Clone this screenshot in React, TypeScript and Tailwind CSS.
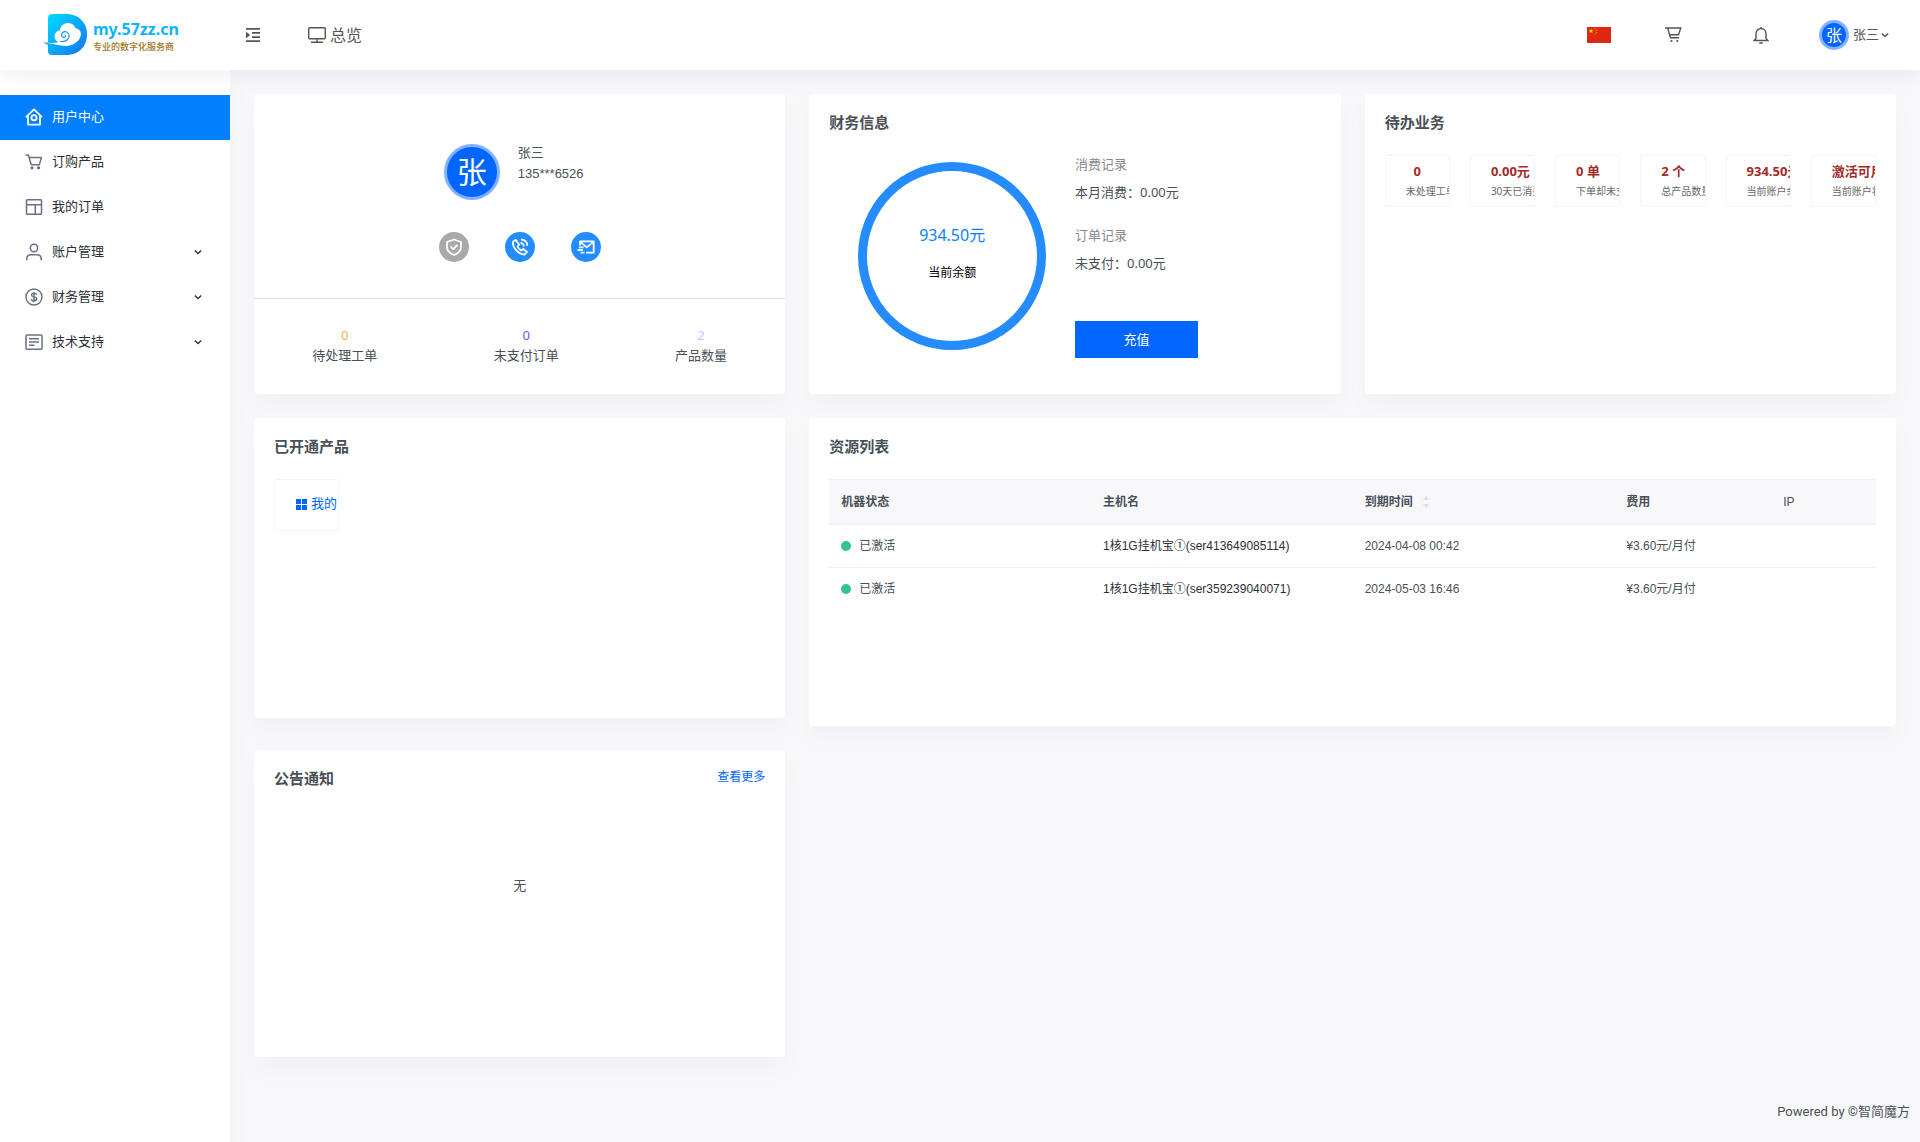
import React from 'react';

interface MenuItem {
  label: string;
  icon: React.ReactNode;
  active?: boolean;
  expandable?: boolean;
}

interface Resource {
  id: string;
  status: string;
  host: string;
  due: string;
  price: string;
}

const HomeIcon = () => (
  <svg viewBox="0 0 18 18" className="h-[18px] w-[18px]" fill="none" stroke="currentColor" strokeWidth="1.8">
    <path d="M1 9.2 9 1.4l8 7.8M3 8v8.6h12V8" strokeLinejoin="round" />
    <circle cx="9" cy="9.8" r="2.6" />
  </svg>
);

const SideCartIcon = () => (
  <svg viewBox="0 0 18 18" className="h-[18px] w-[18px]" fill="none" stroke="currentColor" strokeWidth="1.5">
    <path d="M.5 2h2.8l3 9.8h8L16.4 4.6H4.2" strokeLinejoin="round" />
    <circle cx="7" cy="14.8" r=".9" fill="currentColor" />
    <circle cx="13.5" cy="14.8" r=".9" fill="currentColor" />
  </svg>
);

const LayoutIcon = () => (
  <svg viewBox="0 0 18 18" className="h-[18px] w-[18px]" fill="none" stroke="currentColor" strokeWidth="1.5">
    <rect x="1.5" y="1.7" width="15" height="14.6" rx=".8" />
    <path d="M1.5 6.7h15M10.3 6.7v9.6" />
  </svg>
);

const UserIcon = () => (
  <svg viewBox="0 0 18 18" className="h-[18px] w-[18px]" fill="none" stroke="currentColor" strokeWidth="1.6">
    <circle cx="9" cy="5" r="3.7" />
    <path d="M1.8 17.2v-1.4c0-2.4 1.9-4 4.3-4h5.8c2.4 0 4.3 1.6 4.3 4v1.4" />
  </svg>
);

const DollarIcon = () => (
  <svg viewBox="0 0 18 18" className="h-[18px] w-[18px]" fill="none" stroke="currentColor" strokeWidth="1.4">
    <circle cx="9" cy="9" r="8" />
    <path d="M11.6 6.7c-.3-.9-1.2-1.4-2.6-1.4-1.5 0-2.5.7-2.5 1.8 0 2.6 5.2 1.2 5.2 3.9 0 1.1-1.1 1.800-2.7 1.800s-2.6-.6-2.8-1.7M9 3.9v10.3" />
  </svg>
);

const DocIcon = () => (
  <svg viewBox="0 0 18 18" className="h-[18px] w-[18px]" fill="none" stroke="currentColor" strokeWidth="1.5">
    <rect x="1" y="2" width="16" height="14.2" rx="1" />
    <path d="M4 5.8h10M4 9h10M4 12.2h5.5" />
  </svg>
);

const Chevron = ({ className }: { className: string }) => (
  <svg viewBox="0 0 8 8" className={className} fill="none" stroke="currentColor" strokeWidth="1.3">
    <path d="m.8 2.5 3.2 3 3.2-3" />
  </svg>
);

const Logo = () => (
  <svg viewBox="0 0 44 42" className="h-[42px] w-11 shrink-0">
    <defs>
      <linearGradient id="logoFill" x1="0" y1="0" x2="1" y2="1">
        <stop offset="0" stopColor="#00dcff" />
        <stop offset="1" stopColor="#1673f0" />
      </linearGradient>
    </defs>
    <path d="M9 0h14c12.500 0 21 8.500 21 20.500S35.500 41 23 41H9c-2.600 0-4-1.600-4-4V4c0-2.400 1.400-4 4-4z" fill="url(#logoFill)" />
    <path d="M0 28c2 .6 4 .9 6 .8v2.400C4 30.600 2 29.600 0 28z" fill="#12a5f5" />
    <path
      d="M5 28.700c4.500.5 7.500.2 10.500-.5-3.600-1.600-4.500-5-3.500-8 1-2.700 3-3.800 5-3.900.4-4.600 4-7.600 8.400-7.400 3.600.2 6 2.200 7 5 4.600 1 6 4 5.300 7.800-.9 5-6.700 9.800-13.700 10.200-7 .4-12.500-2.300-19-2.600z"
      fill="#fff"
    />
    <path d="M17.500 27.500c5.800.5 8.900-2.300 8.600-5.900-.2-3.300-4-5.200-6.400-3.200-1.800 1.600-1.300 4.300.6 4.900 1.300.3 2.300-.5 2.200-1.600" fill="none" stroke="#1597f5" strokeWidth="1.2" strokeLinecap="round" />
  </svg>
);

const menuItems: MenuItem[] = [
  { label: '用户中心', icon: <HomeIcon />, active: true },
  { label: '订购产品', icon: <SideCartIcon /> },
  { label: '我的订单', icon: <LayoutIcon /> },
  { label: '账户管理', icon: <UserIcon />, expandable: true },
  { label: '财务管理', icon: <DollarIcon />, expandable: true },
  { label: '技术支持', icon: <DocIcon />, expandable: true },
];

const stats = [
  { value: '0', label: '待处理工单', color: 'text-[#f1b05c]' },
  { value: '0', label: '未支付订单', color: 'text-[#5b5bff]' },
  { value: '2', label: '产品数量', color: 'text-[#b5d0ff]' },
];

const todos = [
  { value: '0', label: '未处理工单' },
  { value: '0.00元', label: '30天已消费' },
  { value: '0 单', label: '下单却未支付' },
  { value: '2 个', label: '总产品数量' },
  { value: '934.50元', label: '当前账户余额' },
  { value: '激活可用', label: '当前账户状态' },
];

const resources: Resource[] = [
  { id: 'ser413649085114', status: '已激活', host: '1核1G挂机宝①', due: '2024-04-08 00:42', price: '¥3.60元/月付' },
  { id: 'ser359239040071', status: '已激活', host: '1核1G挂机宝①', due: '2024-05-03 16:46', price: '¥3.60元/月付' },
];

const Card = ({ className = '', children }: { className?: string; children: React.ReactNode }) => (
  <section className={`rounded bg-white shadow-[0_12px_24px_rgba(18,38,63,0.03)] ${className}`}>{children}</section>
);

const CardTitle = ({ children }: { children: React.ReactNode }) => (
  <h2 className="mb-6 text-[15px] leading-[18px] font-bold text-[#495057]">{children}</h2>
);

const Header = () => (
  <header className="relative z-20 flex h-[70px] items-center bg-white text-[#555] shadow-[0_4px_20px_rgba(18,38,63,0.08)]">
    <a href="#" className="flex w-[230px] items-center gap-1.5 pl-[43px]">
      <Logo />
      <span className="flex flex-col whitespace-nowrap">
        <span className="font-['Noto_Sans',sans-serif] text-base leading-6 font-bold text-[#0cb4ff]">my.57zz.cn</span>
        <span className="text-[9px] leading-3 font-medium text-[#a0741c]">专业的数字化服务商</span>
      </span>
    </a>
    <button type="button" aria-label="菜单" className="ml-4">
      <svg viewBox="0 0 14 14" className="h-3.5 w-3.5" fill="currentColor">
        <path d="M0 0h14v1.7H0zM6 4.1h8v1.7H6zM6 8.2h8v1.7H6zM0 12.3h14V14H0zM0 3.7 4.2 7 0 10.3z" />
      </svg>
    </button>
    <a href="#" className="ml-12 flex items-center gap-1 text-base leading-5">
      <svg viewBox="0 0 18 16" className="h-4 w-[18px]" fill="none" stroke="currentColor" strokeWidth="1.4">
        <rect x=".7" y=".7" width="16.6" height="11" rx="1" />
        <path d="M9 12v3M3 15.3h12" />
      </svg>
      总览
    </a>
    <div className="ml-auto flex items-center pr-[31px]">
      <button type="button" aria-label="语言">
        <svg viewBox="0 0 24 16" className="h-4 w-6">
          <path d="M0 0h24v16H0z" fill="#de2910" />
          <g fill="#ffde00">
            <path d="m4 1.600.6 1.700h1.800L5 4.400l.5 1.700L4 5.100 2.500 6.100 3 4.400 1.600 3.300h1.800z" />
            <circle cx="8" cy="1.700" r=".5" />
            <circle cx="9.700" cy="3.200" r=".5" />
            <circle cx="9.700" cy="5.300" r=".5" />
            <circle cx="8" cy="6.900" r=".5" />
          </g>
        </svg>
      </button>
      <button type="button" aria-label="购物车" className="ml-[54px]">
        <svg viewBox="0 0 17 16" className="h-4 w-[17px]" fill="none" stroke="currentColor" strokeWidth="1.4">
          <path d="M0 1h15.800l-2.300 6.800H5.300M2.600 1 5.500 10.800h8.600" />
          <circle cx="6.500" cy="14" r="1.100" fill="currentColor" stroke="none" />
          <circle cx="12.300" cy="14" r="1.100" fill="currentColor" stroke="none" />
        </svg>
      </button>
      <button type="button" aria-label="通知" className="ml-[71px]">
        <svg viewBox="0 0 16 17" className="h-[17px] w-4" fill="none" stroke="currentColor" strokeWidth="1.4">
          <path d="M3 11.500V6.800C3 3.700 5.200 1.500 8 1.500s5 2.200 5 5.300v4.700l1.900 2H1.100zM6.200 16h3.600M8 0v1.500" />
        </svg>
      </button>
      <button type="button" className="ml-[50px] flex items-center text-[13px]">
        <span className="flex h-[30px] w-[30px] items-center justify-center rounded-full border-[3px] border-[#80b2ff] bg-[#0066ff] text-base leading-none text-white">
          张
        </span>
        <span className="ml-1">张三</span>
        <Chevron className="ml-0.5 h-2 w-2" />
      </button>
    </div>
  </header>
);

const Sidebar = () => (
  <nav className="w-[230px] shrink-0 bg-white pt-[25px] shadow-[0_12px_24px_rgba(18,38,63,0.03)]">
    <ul>
      {menuItems.map((item) => (
        <li key={item.label}>
          <a
            href="#"
            className={`flex h-[45px] items-center pr-7 pb-0.5 pl-[25px] text-[13px] ${item.active ? 'bg-[#0080ff] text-white' : 'text-[#2b2f36]'}`}
          >
            <span className={item.active ? 'text-white' : 'text-[#6a7187]'}>{item.icon}</span>
            <span className="ml-[9px]">{item.label}</span>
            {item.expandable && <Chevron className="ml-auto h-2 w-2" />}
          </a>
        </li>
      ))}
    </ul>
  </nav>
);

const UserCard = () => (
  <Card className="min-h-[300px] pt-[50px]">
    <div className="flex justify-center">
      <div className="flex h-14 w-14 items-center justify-center rounded-full border-[3px] border-[#80b2ff] bg-[#0066ff] text-[30px] leading-none text-white">
        张
      </div>
      <div className="-mt-0.5 ml-[18px] pr-3 leading-[21px]">
        <p>张三</p>
        <p className="font-['Liberation_Sans',sans-serif]">135***6526</p>
      </div>
    </div>
    <div className="mt-8 flex justify-center gap-9 text-white">
      <span className="flex h-[30px] w-[30px] items-center justify-center rounded-full bg-[#a9a9a9]">
        <svg viewBox="0 0 18 18" className="h-[18px] w-[18px]" fill="none" stroke="currentColor" strokeWidth="1.8">
          <path d="M9 1.500 16 4v5c0 4-3 6.500-7 8-4-1.500-7-4-7-8V4z" strokeLinejoin="round" />
          <path d="m5.600 8.600 2.600 2.500 4.300-4.200" />
        </svg>
      </span>
      <span className="flex h-[30px] w-[30px] items-center justify-center rounded-full bg-[#238cff]">
        <svg viewBox="0 0 18 18" className="h-[18px] w-[18px]" fill="none" stroke="currentColor" strokeWidth="1.8" strokeLinejoin="round">
          <path d="M4.600 1.900 2.200 3.500c-1.500 5.500 5.500 13.300 11.500 13l2.300-2.500-3.700-3-2.200 1.400c-1.600-.8-2.900-2.300-3.500-3.900l1.500-2z" />
          <path d="M10.200 5c1.400.3 2.400 1.300 2.700 2.700M10.600 1.500c3.100.4 5.300 2.500 5.700 5.600" strokeLinecap="round" />
        </svg>
      </span>
      <span className="flex h-[30px] w-[30px] items-center justify-center rounded-full bg-[#238cff]">
        <svg viewBox="0 0 18 18" className="h-[18px] w-[18px]" fill="none" stroke="currentColor" strokeWidth="1.8" strokeLinejoin="round">
          <path d="M3 7.500V3.300h13.700v11.400H9M3 3.600l6.800 5.800 6.900-5.800M1.800 9.300h4.700M.5 12h5.300M3.600 14.700h3.900" />
        </svg>
      </span>
    </div>
    <div className="mt-9 flex justify-around border-t border-[#e2e4e7] pt-[26px] text-center leading-5">
      {stats.map((stat) => (
        <div key={stat.label}>
          <p className={stat.color}>{stat.value}</p>
          <p>{stat.label}</p>
        </div>
      ))}
    </div>
  </Card>
);

const FinanceCard = () => (
  <Card className="min-h-[300px] px-5 pt-[19px] pb-5">
    <CardTitle>财务信息</CardTitle>
    <div className="grid grid-cols-2">
      <div className="mx-auto mt-[7px] flex h-[188px] w-[188px] flex-col items-center justify-center gap-3.5 rounded-full border-[9px] border-[#258cff] pb-1">
        <span className="text-base leading-6 text-[#0b80ff]">934.50元</span>
        <span className="text-xs leading-6 text-black">当前余额</span>
      </div>
      <div className="leading-[18px]">
        <p className="text-[#888]">消费记录</p>
        <p className="mt-2.5">本月消费：0.00元</p>
        <p className="mt-[25px] text-[#888]">订单记录</p>
        <p className="mt-2.5">未支付：0.00元</p>
        <button type="button" className="mt-[49px] h-[37px] w-1/2 bg-[#0066ff] pb-0.5 text-white">
          充值
        </button>
      </div>
    </div>
  </Card>
);

const TodoCard = () => (
  <Card className="min-h-[300px] px-5 pt-[19px] pb-5">
    <CardTitle>待办业务</CardTitle>
    <div className="grid grid-cols-6 gap-5">
      {todos.map((todo) => (
        <div key={todo.label} className="min-w-0 overflow-hidden rounded-xs border border-[#f4f4f6] px-5 py-[5px] text-center leading-5 whitespace-nowrap">
          <p className="font-bold text-[#a52a2a]">{todo.value}</p>
          <p className="text-[10px] leading-5 text-[#666]">{todo.label}</p>
        </div>
      ))}
    </div>
  </Card>
);

const ProductCard = () => (
  <Card className="min-h-[300px] px-5 pt-[19px] pb-5">
    <CardTitle>已开通产品</CardTitle>
    <div className="grid grid-cols-6 gap-5">
      <a href="#" className="flex h-[52px] min-w-0 items-center gap-1 overflow-hidden rounded-xs border border-[#f4f4f6] pb-0.5 pl-[21px] whitespace-nowrap text-[#0066ff]">
        <svg viewBox="0 0 11 11" className="h-[11px] w-[11px] shrink-0" fill="currentColor">
          <path d="M0 0h5v5H0zM6 0h5v5H6zM0 6h5v5H0zM6 6h5v5H6z" />
        </svg>
        我的
      </a>
    </div>
  </Card>
);

const ResourceCard = () => (
  <Card className="col-span-2 min-h-[308px] px-5 pt-[19px] pb-5">
    <CardTitle>资源列表</CardTitle>
    <table className="w-full table-fixed border-separate border-spacing-0 text-left font-['Liberation_Sans','Noto_Sans_CJK_SC',sans-serif] text-xs">
      <colgroup>
        <col className="w-[25%]" />
        <col className="w-[25%]" />
        <col className="w-[25%]" />
        <col className="w-[15%]" />
        <col className="w-[10%]" />
      </colgroup>
      <thead className="bg-[#f8f8fb]">
        <tr>
          {['机器状态', '主机名', '到期时间', '费用', 'IP'].map((name) => (
            <th
              key={name}
              className={`h-[46px] border-t border-b-2 border-[#eff2f7] px-3 ${name === 'IP' ? 'font-medium' : 'font-bold'}`}
            >
              {name === '到期时间' ? (
                <button type="button" className="flex items-center gap-2.5">
                  {name}
                  <svg viewBox="0 0 6 12" className="h-3 w-1.5" fill="#dcdde0">
                    <path d="m3 0 3 4H0zM3 12l3-4H0z" />
                  </svg>
                </button>
              ) : (
                name
              )}
            </th>
          ))}
        </tr>
      </thead>
      <tbody>
        {resources.map((row, index) => {
          const cell = index < resources.length - 1 ? 'h-[43px] border-b border-[#eff2f7] px-3' : 'h-[42px] px-3';
          return (
            <tr key={row.id}>
              <td className={cell}>
                <span className="flex items-center gap-2">
                  <span className="h-2.5 w-2.5 rounded-full bg-[#34c38f]"></span>
                  {row.status}
                </span>
              </td>
              <td className={cell}>
                <a href="#" className="text-[#2b2f36]">{row.host}({row.id})</a>
              </td>
              <td className={cell}>{row.due}</td>
              <td className={cell}>{row.price}</td>
              <td className={cell}></td>
            </tr>
          );
        })}
      </tbody>
    </table>
  </Card>
);

const NoticeCard = () => (
  <Card className="min-h-[307px] px-5 pt-[19px] pb-5">
    <div className="flex justify-between">
      <CardTitle>公告通知</CardTitle>
      <a href="#" className="text-xs leading-4 text-[#0066ff]">查看更多</a>
    </div>
    <p className="mt-16 text-center leading-5">无</p>
  </Card>
);

const App: React.FC = () => {
  return (
    <div className="flex min-h-screen flex-col bg-[#f8f8fb] font-['Noto_Sans','Noto_Sans_CJK_SC',sans-serif] text-[13px] text-[#495057]">
      <Header />
      <div className="flex flex-1">
        <Sidebar />
        <div className="flex min-w-0 flex-1 flex-col">
          <main className="grid grid-cols-3 items-start gap-6 p-6">
            <UserCard />
            <FinanceCard />
            <TodoCard />
            <ProductCard />
            <ResourceCard />
            <NoticeCard />
          </main>
          <footer className="mt-auto flex h-[60px] items-center justify-end pr-2.5 font-['Roboto','Noto_Sans_CJK_SC',sans-serif]">
            Powered by ©智简魔方
          </footer>
        </div>
      </div>
    </div>
  );
};

export default App;
